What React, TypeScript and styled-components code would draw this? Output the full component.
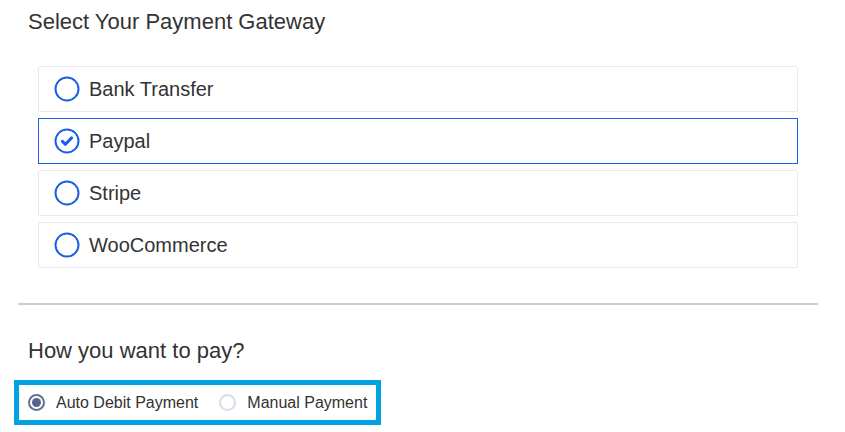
import styled, { createGlobalStyle } from "styled-components";
import { useState } from "react";

const GlobalStyle = createGlobalStyle`
  body {
    margin: 0;
    background: #ffffff;
    font-family: "Liberation Sans", Arial, sans-serif;
    color: #333333;
  }
`;

const Page = styled.div`
  width: 845px;
  padding-top: 8px;
`;

const Heading = styled.h2`
  margin: 0 0 0 28px;
  font-size: 22px;
  font-weight: 400;
  line-height: 28px;
  color: #333;
`;

const GatewayList = styled.div`
  display: flex;
  flex-direction: column;
  gap: 6px;
  margin: 30px 47px 0 38px;
`;

const GatewayItem = styled.label<{ $active: boolean }>`
  display: flex;
  align-items: center;
  gap: 9px;
  height: 46px;
  box-sizing: border-box;
  padding-left: 15px;
  border: 1px solid ${(p) => (p.$active ? "#1a5fe6" : "#e8e8e8")};
  border-radius: ${(p) => (p.$active ? "0" : "2px")};
  font-size: 20px;
  color: #333;
  cursor: pointer;
`;

const Divider = styled.hr`
  margin: 35px 27px 0 18px;
  border: 0;
  height: 2px;
  background: #c9c9e0;
`;

const SubHeading = styled(Heading)`
  margin-top: 32px;
`;

const PayBox = styled.div`
  display: inline-flex;
  align-items: center;
  gap: 21px;
  margin: 15px 0 0 14px;
  padding: 0 9px;
  height: 45px;
  box-sizing: border-box;
  border: 5px solid #00a2e1;
`;

const PayOption = styled.label`
  display: flex;
  align-items: center;
  gap: 11px;
  font-size: 16px;
  color: #333;
  cursor: pointer;
`;

const SmallRadio = styled.span<{ $checked: boolean }>`
  width: 17px;
  height: 17px;
  box-sizing: border-box;
  border-radius: 50%;
  border: 2px solid ${(p) => (p.$checked ? "#65718c" : "#d5dcea")};
  display: flex;
  align-items: center;
  justify-content: center;
  &::after {
    content: "";
    width: 9px;
    height: 9px;
    border-radius: 50%;
    background: ${(p) => (p.$checked ? "#56648a" : "transparent")};
  }
`;

function GatewayRadio({ checked }: { checked: boolean }) {
  return (
    <svg width="26" height="26" viewBox="0 0 26 26">
      <circle cx="13" cy="13" r="11.5" fill="none" stroke="#1a5fe6" strokeWidth="2" />
      {checked && (
        <path
          d="M8.4 13.4l3 2.9 6.2-6.4"
          fill="none"
          stroke="#1a5fe6"
          strokeWidth="3"
          strokeLinecap="round"
          strokeLinejoin="round"
        />
      )}
    </svg>
  );
}

const gateways = ["Bank Transfer", "Paypal", "Stripe", "WooCommerce"];

export default function App() {
  const [gateway, setGateway] = useState("Paypal");
  const [mode, setMode] = useState("auto");

  return (
    <Page>
      <GlobalStyle />
      <Heading>Select Your Payment Gateway</Heading>
      <GatewayList>
        {gateways.map((g) => (
          <GatewayItem key={g} $active={g === gateway} onClick={() => setGateway(g)}>
            <GatewayRadio checked={g === gateway} />
            {g}
          </GatewayItem>
        ))}
      </GatewayList>
      <Divider />
      <SubHeading>How you want to pay?</SubHeading>
      <PayBox>
        <PayOption onClick={() => setMode("auto")}>
          <SmallRadio $checked={mode === "auto"} />
          Auto Debit Payment
        </PayOption>
        <PayOption onClick={() => setMode("manual")}>
          <SmallRadio $checked={mode === "manual"} />
          Manual Payment
        </PayOption>
      </PayBox>
    </Page>
  );
}
